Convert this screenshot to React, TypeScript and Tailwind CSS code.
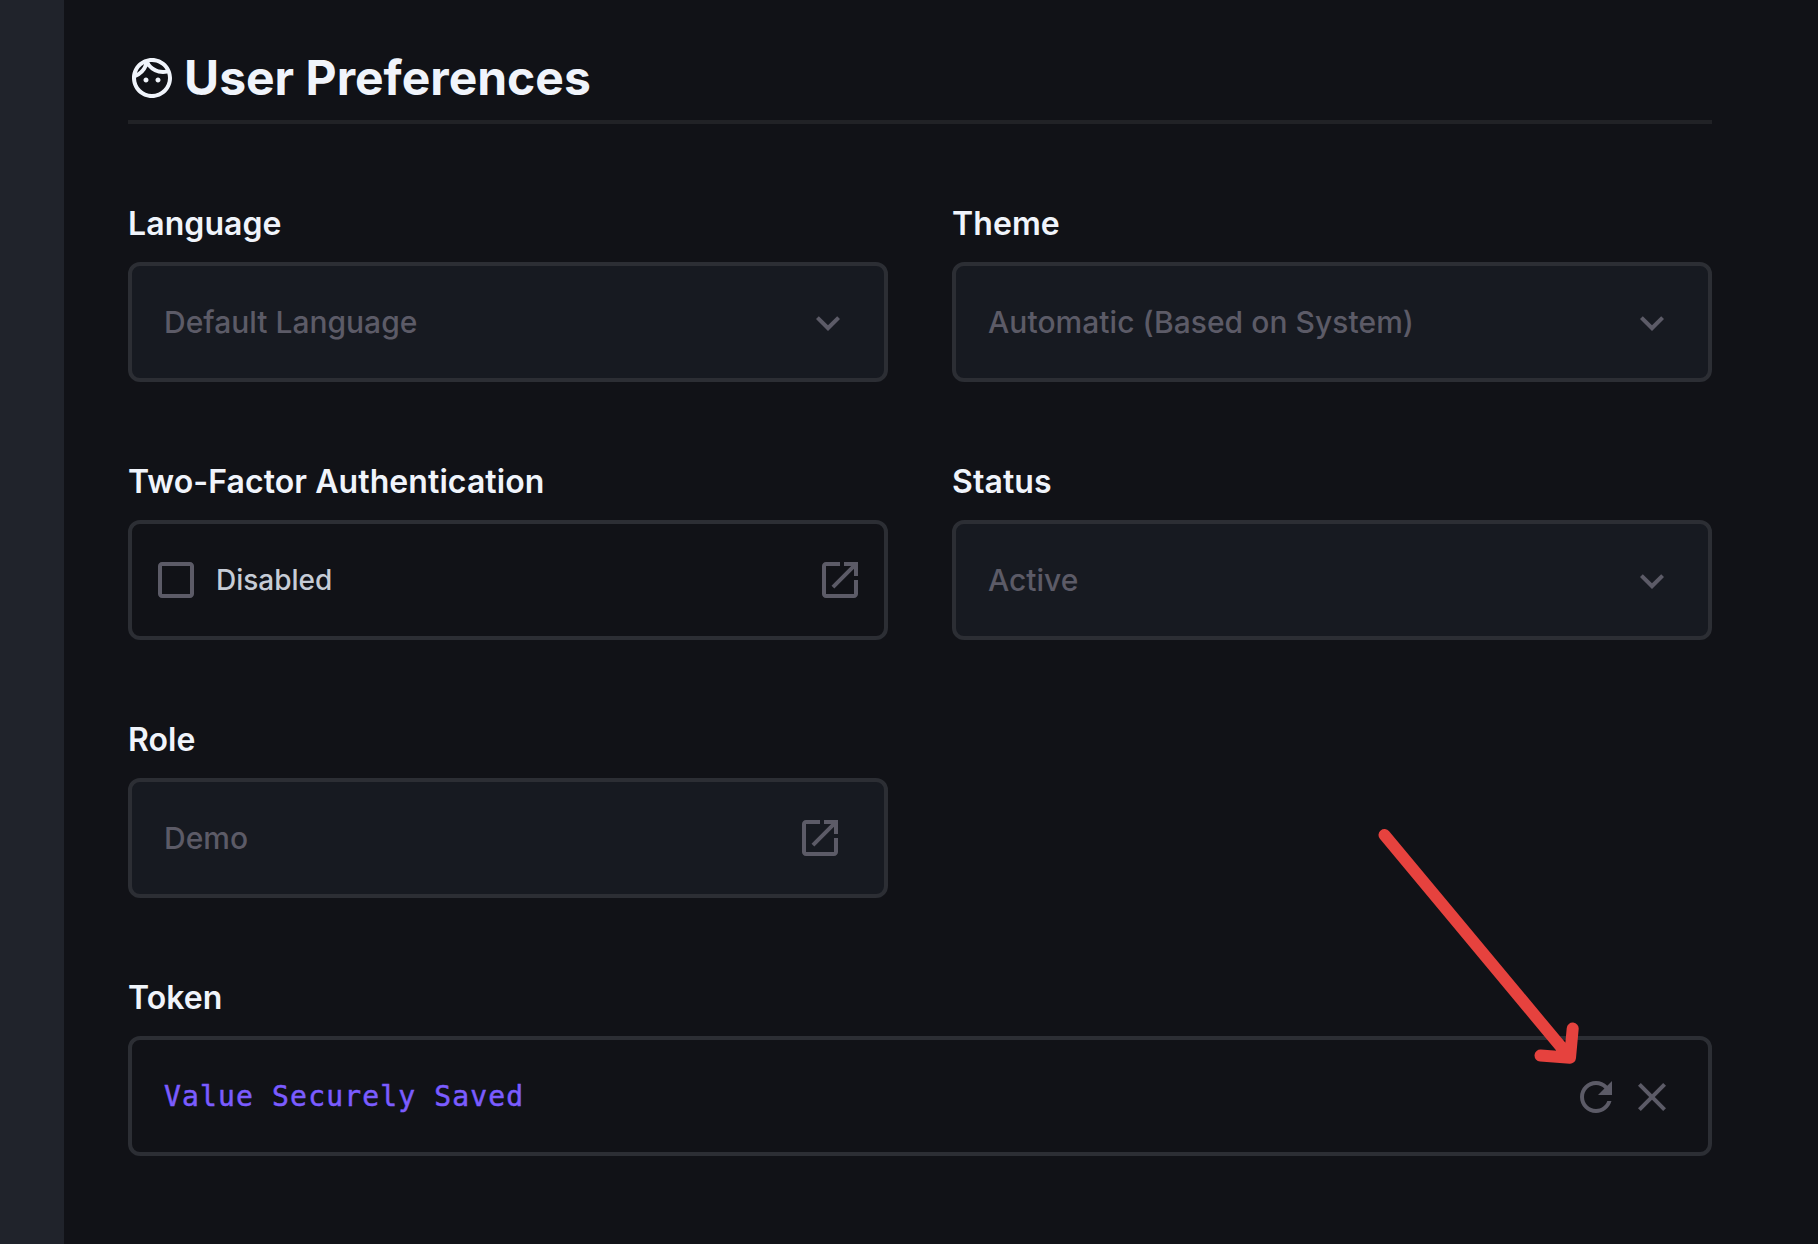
import type { ReactNode } from "react";

const icons = {
  face: "M10.25 13c0 .69-.56 1.25-1.25 1.25S7.75 13.69 7.75 13s.56-1.25 1.25-1.25 1.25.56 1.25 1.25zM15 11.75c-.69 0-1.25.56-1.25 1.25s.56 1.25 1.25 1.25 1.25-.56 1.25-1.25-.56-1.25-1.25-1.25zm7 .25c0 5.52-4.48 10-10 10S2 17.52 2 12 6.48 2 12 2s10 4.48 10 10zM10.66 4.12C12.06 6.44 14.6 8 17.5 8c.46 0 .91-.05 1.34-.12C17.44 5.56 14.9 4 12 4c-.46 0-.91.05-1.34.12zM4.42 9.47a8.046 8.046 0 0 0 3.66-4.44 8.046 8.046 0 0 0-3.66 4.44zM20 12c0-.78-.12-1.53-.33-2.24-.7.15-1.42.24-2.17.24a10 10 0 0 1-7.76-3.69A10.016 10.016 0 0 1 4 11.86c.01.04 0 .09 0 .14 0 4.41 3.59 8 8 8s8-3.59 8-8z",
  expand: "M7.41 8.59 12 13.17l4.59-4.58L18 10l-6 6-6-6z",
  checkbox:
    "M19 5v14H5V5h14m0-2H5c-1.1 0-2 .9-2 2v14c0 1.1.9 2 2 2h14c1.1 0 2-.9 2-2V5c0-1.1-.9-2-2-2z",
  open: "M19 19H5V5h7V3H5c-1.11 0-2 .9-2 2v14c0 1.1.89 2 2 2h14c1.1 0 2-.9 2-2v-7h-2v7zM14 3v2h3.59l-9.83 9.83 1.41 1.41L19 6.41V10h2V3h-7z",
  refresh:
    "M17.65 6.35C16.2 4.9 14.21 4 12 4c-4.42 0-7.99 3.58-7.99 8s3.57 8 7.99 8c3.73 0 6.84-2.55 7.73-6h-2.08c-.82 2.33-3.04 4-5.65 4-3.31 0-6-2.69-6-6s2.69-6 6-6c1.66 0 3.14.69 4.22 1.78L13 11h7V4l-2.35 2.35z",
  close:
    "M19 6.41 17.59 5 12 10.59 6.41 5 5 6.41 10.59 12 5 17.59 6.41 19 12 13.41 17.59 19 19 17.59 13.41 12z",
};

function Icon({ name, className = "" }: { name: keyof typeof icons; className?: string }) {
  return (
    <svg viewBox="0 0 24 24" className={`size-12 shrink-0 fill-current ${className}`} aria-hidden>
      <path d={icons[name]} />
    </svg>
  );
}

function Field({
  label,
  filled = false,
  wide = false,
  padding = "px-8",
  children,
}: {
  label: string;
  filled?: boolean;
  wide?: boolean;
  padding?: string;
  children: ReactNode;
}) {
  return (
    <div className={wide ? "col-span-2" : "col-span-1"}>
      <div className="mb-[15px] pt-px text-[32px] leading-[46px] font-semibold tracking-[0.08px] text-[#f0f4fb]">
        {label}
      </div>
      <div
        className={`flex h-[120px] items-center justify-between rounded-xl border-4 border-[#2c2e34] text-[30px] font-medium text-[#5c5b67] ${padding} ${filled ? "bg-[#171a21]" : ""}`}
      >
        {children}
      </div>
    </div>
  );
}

export default function App() {
  return (
    <div className="relative flex h-[1244px] w-[1818px] overflow-hidden bg-[#111217] font-['Inter',sans-serif]">
      <aside className="w-16 shrink-0 bg-[#20232b]" />
      <main className="flex-1 pr-[106px] pl-16">
        <header className="flex h-[124px] items-end gap-2 border-b-4 border-[#212226] pb-[17px] text-[#f0f4fb]">
          <Icon name="face" className="mb-[1px]" />
          <h1 className="text-[48px] leading-[50px] font-bold">User Preferences</h1>
        </header>
        <div className="mt-[76px] grid grid-cols-2 gap-x-16 gap-y-[76px]">
          <Field label="Language" filled>
            <span>Default Language</span>
            <Icon name="expand" className="mt-[2px]" />
          </Field>
          <Field label="Theme" filled>
            <span className="tracking-[0.05px]">Automatic (Based on System)</span>
            <Icon name="expand" className="mt-[2px]" />
          </Field>
          <Field label="Two-Factor Authentication" padding="px-5">
            <div className="flex items-center gap-4">
              <Icon name="checkbox" />
              <span className="text-[28px] text-[#c6ccd6]">Disabled</span>
            </div>
            <Icon name="open" />
          </Field>
          <Field label="Status" filled>
            <span>Active</span>
            <Icon name="expand" className="mt-[2px]" />
          </Field>
          <Field label="Role" filled padding="pl-8 pr-10">
            <span>Demo</span>
            <Icon name="open" />
          </Field>
          <Field label="Token" wide>
            <span className="mt-[2px] font-['DejaVu_Sans_Mono',monospace] text-[28px] font-normal tracking-[1.16px] text-[#7b5cff] [-webkit-text-stroke:0.5px]">
              Value Securely Saved
            </span>
            <div className="mt-[2px] flex gap-2">
              <Icon name="refresh" />
              <Icon name="close" />
            </div>
          </Field>
        </div>
      </main>
      <svg
        className="absolute top-[820px] left-[1370px] h-[260px] w-[220px] fill-none stroke-[#e6423e] stroke-12"
        viewBox="1370 820 220 260"
        strokeLinecap="round"
        strokeLinejoin="round"
        aria-hidden
      >
        <path d="M1384.5 835 1570 1057.7M1540.5 1055.5 1570 1057.7 1572.7 1028.5" />
      </svg>
    </div>
  );
}
